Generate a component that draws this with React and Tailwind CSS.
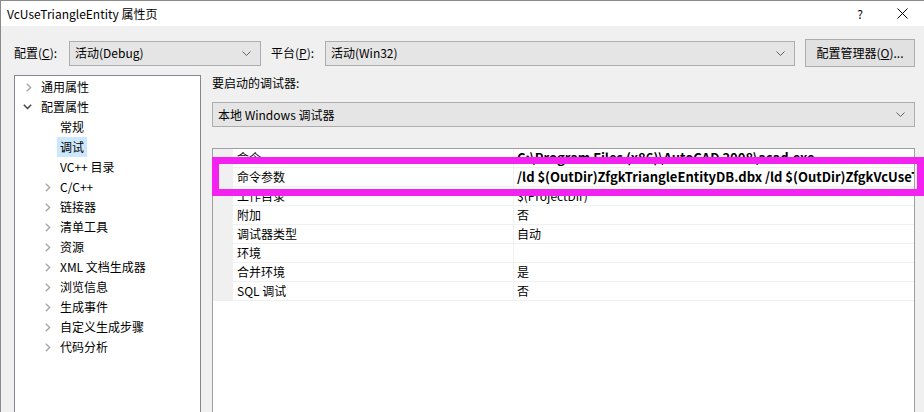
import React from 'react';

const FONT = { fontFamily: '"Noto Sans CJK SC", "Noto Sans", sans-serif' };

const treeItems = [
  { label: '通用属性', level: 0, arrow: 'right' },
  { label: '配置属性', level: 0, arrow: 'down' },
  { label: '常规', level: 1 },
  { label: '调试', level: 1, selected: true },
  { label: 'VC++ 目录', level: 1 },
  { label: 'C/C++', level: 1, arrow: 'right' },
  { label: '链接器', level: 1, arrow: 'right' },
  { label: '清单工具', level: 1, arrow: 'right' },
  { label: '资源', level: 1, arrow: 'right' },
  { label: 'XML 文档生成器', level: 1, arrow: 'right' },
  { label: '浏览信息', level: 1, arrow: 'right' },
  { label: '生成事件', level: 1, arrow: 'right' },
  { label: '自定义生成步骤', level: 1, arrow: 'right' },
  { label: '代码分析', level: 1, arrow: 'right' },
];

const props = [
  { name: '命令', value: 'C:\\Program Files (x86)\\AutoCAD 2008\\acad.exe', bold: true },
  { name: '命令参数', value: '/ld $(OutDir)ZfgkTriangleEntityDB.dbx /ld $(OutDir)ZfgkVcUseTriangleEntity.arx', bold: true },
  { name: '工作目录', value: '$(ProjectDir)' },
  { name: '附加', value: '否' },
  { name: '调试器类型', value: '自动' },
  { name: '环境', value: '' },
  { name: '合并环境', value: '是' },
  { name: 'SQL 调试', value: '否' },
];

const ComboChevron = () => (
  <svg width="9" height="5" viewBox="0 0 9 5" className="shrink-0">
    <path d="M0.5 0.5 L4.5 4.5 L8.5 0.5" fill="none" stroke="#606060" strokeWidth="1" />
  </svg>
);

const TreeArrow = ({ dir }) =>
  dir === 'down' ? (
    <svg width="9" height="6" viewBox="0 0 9 6">
      <path d="M0.8 0.8 L4.5 4.6 L8.2 0.8" fill="none" stroke="#404040" strokeWidth="1.4" />
    </svg>
  ) : (
    <svg width="6" height="9" viewBox="0 0 6 9">
      <path d="M0.8 0.8 L4.6 4.5 L0.8 8.2" fill="none" stroke="#a6a6a6" strokeWidth="1.4" />
    </svg>
  );

const Combo = ({ children, className }) => (
  <div className={`h-[25px] shrink-0 flex items-center justify-between bg-[#e5e5e5] border border-[#adadad] pl-[5px] pr-[9px] text-[12px] text-black ${className}`}>
    <span>{children}</span>
    <ComboChevron />
  </div>
);

export default function App() {
  return (
    <div className="relative w-[924px] h-[412px] overflow-hidden bg-[#f0f0f0] text-black border-t border-l border-[#8a8a8a]" style={FONT}>
      {/* title bar */}
      <div className="h-[25px] bg-white flex items-center pl-[6px] text-[12px]">
        <span className="flex-1">VcUseTriangleEntity 属性页</span>
        <span className="w-[20px] text-center text-[12px] mr-[27px]">?</span>
        <svg width="11" height="11" viewBox="0 0 11 11" className="mr-[16px]">
          <path d="M0.5 0.5 L10.5 10.5 M10.5 0.5 L0.5 10.5" stroke="#000" strokeWidth="1" />
        </svg>
      </div>

      {/* configuration row */}
      <div className="flex items-center h-[28px] mt-[13px] pl-[13px] pr-[9px] text-[12px]">
        <span className="w-[55px] shrink-0">配置(<u>C</u>):</span>
        <Combo className="w-[192px]">活动(Debug)</Combo>
        <span className="ml-[10px] w-[54px] shrink-0">平台(<u>P</u>):</span>
        <Combo className="w-[470px]">活动(Win32)</Combo>
        <button className="ml-[10px] h-[28px] w-[110px] shrink-0 bg-[#e1e1e1] border border-[#adadad] text-[12px]">
          配置管理器(<u>O</u>)...
        </button>
      </div>

      {/* main area */}
      <div className="flex mt-[8px] pl-[13px] pr-[9px] h-[400px]">
        {/* tree */}
        <div className="w-[187px] shrink-0 bg-white border border-[#828790] pt-[1px]">
          {treeItems.map((it) => (
            <div key={it.label} className="h-[20px] flex items-center text-[12px] whitespace-nowrap">
              <div className={`${it.level === 0 ? 'w-[23px]' : 'w-[42px]'} flex justify-end pr-[6px] shrink-0`}>
                {it.arrow && <TreeArrow dir={it.arrow} />}
              </div>
              <span className={`px-[3px] h-[20px] flex items-center ${it.selected ? 'bg-[#cce8ff]' : ''}`}>{it.label}</span>
            </div>
          ))}
        </div>

        {/* right side */}
        <div className="flex-1 min-w-0 ml-[11px] flex flex-col">
          <div className="text-[12px] h-[15px] leading-[15px]">要启动的调试器:</div>
          <Combo className="mt-[12px] h-[24px] pl-[3px]">本地 Windows 调试器</Combo>
          <div className="mt-[21px] flex-1 bg-white border border-[#a0a0a0]">
            {props.map((p) => (
              <div key={p.name} className="flex h-[19px] text-[12px]">
                <div className="w-[20px] bg-[#f0f0f0] shrink-0" />
                <div className="w-[281px] shrink-0 border-b border-r border-[#f0f0f0] pl-[4px] flex items-center">{p.name}</div>
                <div className={`flex-1 min-w-0 border-b border-[#f0f0f0] pl-[3px] flex items-center whitespace-nowrap overflow-hidden ${p.bold ? 'font-bold text-[13px]' : ''}`}>
                  {p.value}
                </div>
              </div>
            ))}
          </div>
        </div>
      </div>

      {/* highlight annotation */}
      <div className="absolute left-[211px] top-[156px] w-[712px] h-[39px] border-[7px] border-[#f322f0] pointer-events-none" />
    </div>
  );
}
